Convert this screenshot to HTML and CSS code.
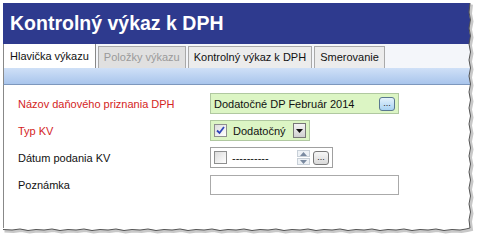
FILE: index.html
```html
<!DOCTYPE html>
<html lang="sk">
  <head>
    <meta charset="UTF-8" />
    <title>Kontrolný výkaz k DPH</title>
    <link rel="stylesheet" href="styles.css">
  </head>
  <body>
    <div class="sheet">
      <div class="title">Kontrolný výkaz k DPH</div>
      <div class="tabs">
        <div class="tab active">Hlavička výkazu</div>
        <div class="tab disabled">Položky výkazu</div>
        <div class="tab">Kontrolný výkaz k DPH</div>
        <div class="tab">Smerovanie</div>
      </div>
      <div class="band"></div>
      <div class="form">
        <div class="row">
          <label class="req">Názov daňového priznania DPH</label>
          <div class="field green wide">
            <span class="val">Dodatočné DP Február 2014</span>
            <span class="dots">...</span>
          </div>
        </div>
        <div class="row">
          <label class="req">Typ KV</label>
          <div class="field green combo">
            <span class="check on">
              <svg width="9" height="9" viewBox="0 0 9 9"><path d="M1 4.5 L3.5 7 L8 1" fill="none" stroke="#2f46b8" stroke-width="1.8"/></svg>
            </span>
            <span class="val">Dodatočný</span>
            <span class="drop">
              <svg width="7" height="4" viewBox="0 0 7 4"><path d="M0 0 H7 L3.5 4 Z" fill="#111"/></svg>
            </span>
          </div>
        </div>
        <div class="row">
          <label>Dátum podania KV</label>
          <div class="field date">
            <span class="check"></span>
            <span class="val">----------</span>
            <span class="spin">
              <span class="up"><svg width="7" height="4" viewBox="0 0 7 4"><path d="M0 4 H7 L3.5 0 Z" fill="#7a8aa0"/></svg></span>
              <span class="down"><svg width="7" height="4" viewBox="0 0 7 4"><path d="M0 0 H7 L3.5 4 Z" fill="#7a8aa0"/></svg></span>
            </span>
            <span class="dots gray">...</span>
          </div>
        </div>
        <div class="row">
          <label>Poznámka</label>
          <div class="field wide plain"></div>
        </div>
      </div>
      <svg class="torn" width="482" height="241" viewBox="0 0 482 241">
        <path d="M3 229.5 L12 230 L20 229 L28 230.5 L36 229.5 L44 230 L52 229 L60 230.5 L68 229.5 L76 230 L84 229 L92 230.5 L100 229.5 L108 230 L116 229 L124 230.5 L132 229.5 L140 230 L148 229 L156 230.5 L164 229.5 L172 230 L180 229 L188 230.5 L196 229.5 L204 230 L212 229 L220 230.5 L228 229.5 L236 230 L244 229 L252 230.5 L260 229.5 L268 230 L276 229 L284 230.5 L292 229.5 L300 230 L308 229 L316 230.5 L324 229.5 L332 230 L340 229 L348 230.5 L356 229.5 L364 230 L372 229 L380 230.5 L388 229.5 L396 230 L404 229 L412 230.5 L420 229.5 L428 230 L436 229 L444 230.5 L452 229.5 L460 230 L466 229 L470 228 L469 220 L470.5 212 L469 204 L470.5 196 L469 188 L470.5 180 L469 172 L470.5 164 L469 156 L470.5 148 L469 140 L470.5 132 L469 124 L470.5 116 L469 108 L470.5 100 L469 92 L470.5 84 L469 76 L470.5 68 L469 60 L470.5 52 L469 44 L470.5 36 L469 28 L470.5 20 L469 12 L470 3" fill="none" stroke="#c8c8c8" stroke-width="3" transform="translate(1.5 1.5)"/>
        <path d="M3 229.5 L12 230 L20 229 L28 230.5 L36 229.5 L44 230 L52 229 L60 230.5 L68 229.5 L76 230 L84 229 L92 230.5 L100 229.5 L108 230 L116 229 L124 230.5 L132 229.5 L140 230 L148 229 L156 230.5 L164 229.5 L172 230 L180 229 L188 230.5 L196 229.5 L204 230 L212 229 L220 230.5 L228 229.5 L236 230 L244 229 L252 230.5 L260 229.5 L268 230 L276 229 L284 230.5 L292 229.5 L300 230 L308 229 L316 230.5 L324 229.5 L332 230 L340 229 L348 230.5 L356 229.5 L364 230 L372 229 L380 230.5 L388 229.5 L396 230 L404 229 L412 230.5 L420 229.5 L428 230 L436 229 L444 230.5 L452 229.5 L460 230 L466 229 L470 228 L469 220 L470.5 212 L469 204 L470.5 196 L469 188 L470.5 180 L469 172 L470.5 164 L469 156 L470.5 148 L469 140 L470.5 132 L469 124 L470.5 116 L469 108 L470.5 100 L469 92 L470.5 84 L469 76 L470.5 68 L469 60 L470.5 52 L469 44 L470.5 36 L469 28 L470.5 20 L469 12 L470 3" fill="none" stroke="#555" stroke-width="1"/>
      </svg>
    </div>
  </body>
</html>
```
FILE: styles.css
```css
body {
  margin: 0;
  background: #fff;
  font-family: "Liberation Sans", Arial, sans-serif;
  font-size: 11px;
  color: #111;
}
.sheet {
  position: relative;
  width: 482px;
  height: 241px;
  padding: 3px 0 0 3px;
  box-sizing: border-box;
}
.title {
  width: 467px;
  height: 41px;
  background: #2e3a8e;
  color: #fff;
  font-weight: bold;
  font-size: 19.5px;
  line-height: 41px;
  padding-left: 7px;
  box-sizing: border-box;
}
.tabs {
  display: flex;
  width: 467px;
  height: 24px;
  background: #f4f6fa;
  padding-top: 2px;
  box-sizing: border-box;
  gap: 2px;
}
.tab {
  height: 22px;
  line-height: 20px;
  padding: 0 5px;
  border: 1px solid #a9a9a9;
  border-bottom: none;
  background: #ececec;
  box-sizing: border-box;
}
.tab.active {
  background: #fff;
  height: 24px;
  margin-top: -2px;
  line-height: 24px;
  border-color: #888;
  border-top: none;
  border-left: 1px solid #888;
  padding: 0 6px;
}
.tab.disabled {
  color: #9a9a9a;
  background: #e0e0e0;
}
.band {
  width: 467px;
  height: 17px;
  background: linear-gradient(#cfe0f7, #a9c5ec);
  border-bottom: 1px solid #7d97bd;
  border-left: 1px solid #888;
  box-sizing: border-box;
}
.form {
  width: 467px;
  height: 143px;
  border-left: 1px solid #888;
  box-sizing: border-box;
  padding: 8px 0 0 14px;
  display: flex;
  flex-direction: column;
  gap: 6px;
}
.row {
  display: flex;
  align-items: center;
  height: 21px;
}
.row label {
  width: 192px;
}
.row label.req {
  color: #d41e24;
}
.field {
  height: 21px;
  border: 1px solid #a0a0a0;
  box-sizing: border-box;
  display: flex;
  align-items: center;
  padding: 0 3px;
  gap: 4px;
}
.field.green {
  background: #dcf5c4;
  border-color: #b0c8a0;
}
.field.wide {
  width: 189px;
}
.field.plain {
  height: 20px;
  border-color: #aaa;
}
.field .val {
  flex: 1;
}
.dots {
  width: 16px;
  height: 14px;
  border: 1px solid #5a7890;
  border-radius: 3px;
  background: linear-gradient(#e4f2fc, #a8d2f2);
  font-size: 9px;
  line-height: 10px;
  text-align: center;
  box-sizing: border-box;
  color: #222;
}
.dots.gray {
  border-color: #777;
  background: linear-gradient(#f6f6f6, #dadada);
}
.combo {
  width: 100px;
  padding-right: 3px;
}
.check {
  width: 13px;
  height: 13px;
  border: 1px solid #8e8f8f;
  background: linear-gradient(135deg, #dcdcdc, #fff);
  box-sizing: border-box;
  display: flex;
  align-items: center;
  justify-content: center;
  margin-right: 2px;
}
.drop {
  width: 13px;
  height: 15px;
  border: 1px solid #777;
  background: linear-gradient(#f4f4f4, #d0d0d0);
  box-sizing: border-box;
  display: flex;
  align-items: center;
  justify-content: center;
}
.date {
  width: 123px;
  background: #fff;
  gap: 3px;
}
.spin {
  display: flex;
  flex-direction: column;
  gap: 1px;
}
.spin span {
  width: 13px;
  height: 7px;
  border: 1px solid #c8d0d8;
  background: #eef2f6;
  box-sizing: border-box;
  display: flex;
  align-items: center;
  justify-content: center;
}
.torn {
  position: absolute;
  left: 0;
  top: 0;
}
```
